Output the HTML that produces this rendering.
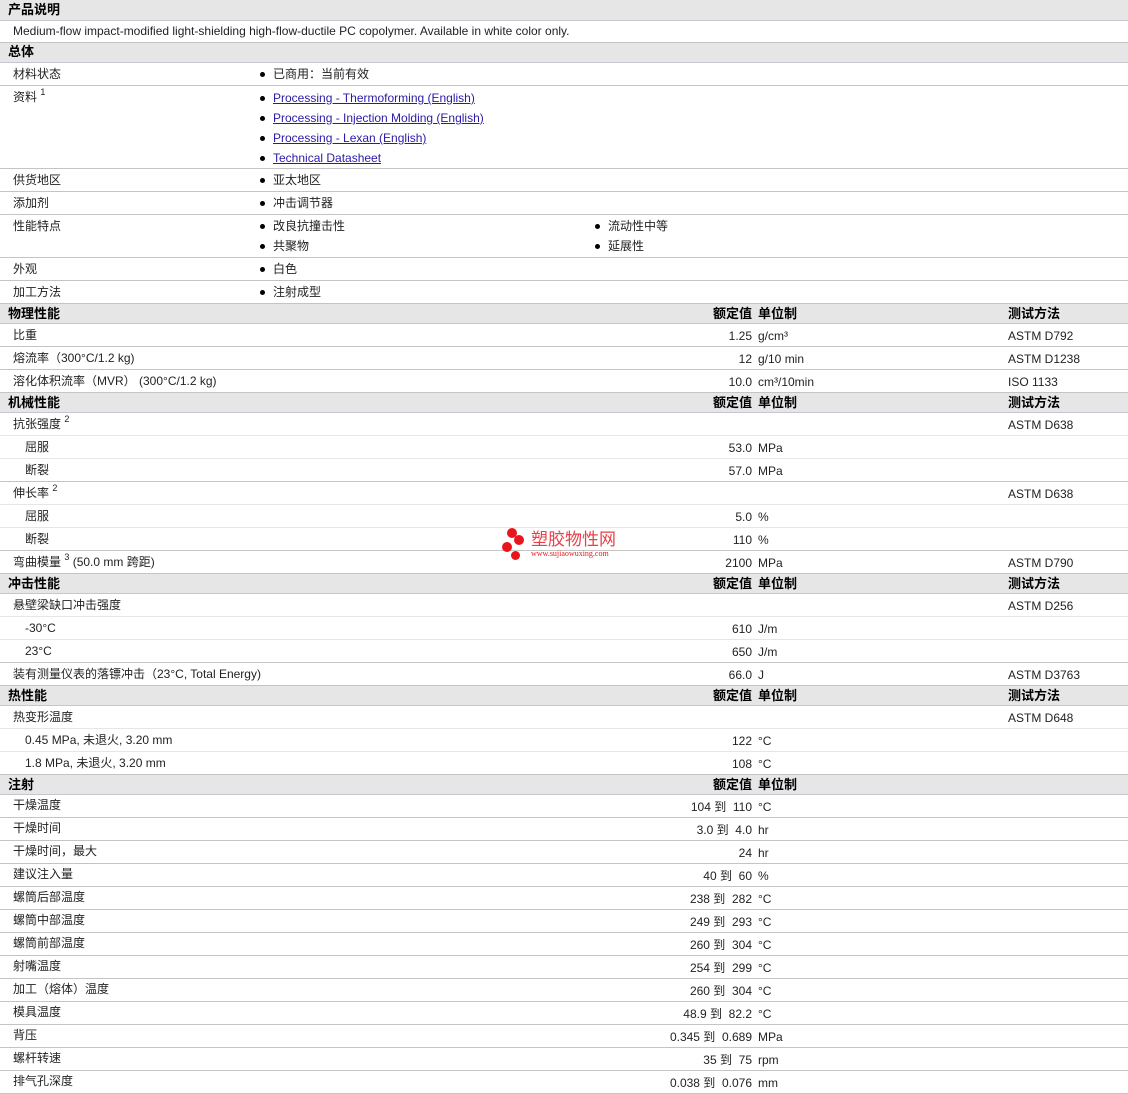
<!DOCTYPE html>
<html><head><meta charset="utf-8"><style>
body{margin:0;width:1128px;height:1089px;overflow:hidden;background:#fff;font-family:"Liberation Sans","Noto Sans CJK SC",sans-serif;font-size:12px;color:#222;position:relative}
.r{position:absolute;left:0;width:1128px;border-bottom:1px solid #c4c4c4;box-sizing:border-box}
.l{border-bottom-color:#e6e6e6}
.h{background:#e6e6e6;border-bottom:1px solid #c8c4d0;font-weight:bold;font-size:13px;color:#000}
.r span{position:absolute;white-space:nowrap;line-height:14px}
.a{left:13px;top:4px}.s{left:25px;top:4px}
.v{right:376px;top:5px;text-align:right}
.u{left:758px;top:5px}
.m{left:1008px;top:5px}
.h .a{left:8px;top:3px}
.h .hv{right:376px;top:3px}.h .hu{left:758px;top:3px}.h .hm{left:1008px;top:3px}
.b{left:273px}.b2{left:608px}
.b::before,.b2::before{content:"";position:absolute;left:-13px;top:5px;width:5px;height:5px;border-radius:50%;background:#000}
a{color:#2a1aa8;text-decoration:underline}
sup{font-size:9px;vertical-align:6px;line-height:0}
</style></head><body>
<div class="r h" style="top:0;height:21px"><span class="a">产品说明</span></div>
<div class="r" style="top:21px;height:22px"><span class="a" style="top:3px">Medium-flow impact-modified light-shielding high-flow-ductile PC copolymer. Available in white color only.</span></div>
<div class="r h" style="top:43px;height:20px"><span class="a" style="top:2px">总体</span></div>
<div class="r" style="top:63px;height:23px"><span class="a">材料状态</span><span class="b" style="top:4px">已商用：当前有效</span></div>
<div class="r" style="top:86px;height:83px"><span class="a">资料 <sup>1</sup></span>
<span class="b" style="top:5px"><a>Processing - Thermoforming (English)</a></span>
<span class="b" style="top:25px"><a>Processing - Injection Molding (English)</a></span>
<span class="b" style="top:45px"><a>Processing - Lexan (English)</a></span>
<span class="b" style="top:65px"><a>Technical Datasheet</a></span></div>
<div class="r" style="top:169px;height:23px"><span class="a">供货地区</span><span class="b" style="top:4px">亚太地区</span></div>
<div class="r" style="top:192px;height:23px"><span class="a">添加剂</span><span class="b" style="top:4px">冲击调节器</span></div>
<div class="r" style="top:215px;height:43px"><span class="a">性能特点</span><span class="b" style="top:4px">改良抗撞击性</span><span class="b2" style="top:4px">流动性中等</span><span class="b" style="top:24px">共聚物</span><span class="b2" style="top:24px">延展性</span></div>
<div class="r" style="top:258px;height:23px"><span class="a">外观</span><span class="b" style="top:4px">白色</span></div>
<div class="r" style="top:281px;height:23px"><span class="a">加工方法</span><span class="b" style="top:4px">注射成型</span></div>

<div class="r h" style="top:304px;height:20px"><span class="a">物理性能</span><span class="hv">额定值</span><span class="hu">单位制</span><span class="hm">测试方法</span></div>
<div class="r" style="top:324px;height:23px"><span class="a">比重</span><span class="v">1.25</span><span class="u">g/cm³</span><span class="m">ASTM D792</span></div>
<div class="r" style="top:347px;height:23px"><span class="a">熔流率（300°C/1.2 kg)</span><span class="v">12</span><span class="u">g/10 min</span><span class="m">ASTM D1238</span></div>
<div class="r" style="top:370px;height:23px"><span class="a">溶化体积流率（MVR） (300°C/1.2 kg)</span><span class="v">10.0</span><span class="u">cm³/10min</span><span class="m">ISO 1133</span></div>

<div class="r h" style="top:393px;height:20px"><span class="a">机械性能</span><span class="hv">额定值</span><span class="hu">单位制</span><span class="hm">测试方法</span></div>
<div class="r l" style="top:413px;height:23px"><span class="a">抗张强度 <sup>2</sup></span><span class="m">ASTM D638</span></div>
<div class="r l" style="top:436px;height:23px"><span class="s">屈服</span><span class="v">53.0</span><span class="u">MPa</span></div>
<div class="r" style="top:459px;height:23px"><span class="s">断裂</span><span class="v">57.0</span><span class="u">MPa</span></div>
<div class="r l" style="top:482px;height:23px"><span class="a">伸长率 <sup>2</sup></span><span class="m">ASTM D638</span></div>
<div class="r l" style="top:505px;height:23px"><span class="s">屈服</span><span class="v">5.0</span><span class="u">%</span></div>
<div class="r" style="top:528px;height:23px"><span class="s">断裂</span><span class="v">110</span><span class="u">%</span></div>
<div class="r" style="top:551px;height:23px"><span class="a">弯曲模量 <sup>3</sup> (50.0 mm 跨距)</span><span class="v">2100</span><span class="u">MPa</span><span class="m">ASTM D790</span></div>

<div class="r h" style="top:574px;height:20px"><span class="a">冲击性能</span><span class="hv">额定值</span><span class="hu">单位制</span><span class="hm">测试方法</span></div>
<div class="r l" style="top:594px;height:23px"><span class="a">悬壁梁缺口冲击强度</span><span class="m">ASTM D256</span></div>
<div class="r l" style="top:617px;height:23px"><span class="s">-30°C</span><span class="v">610</span><span class="u">J/m</span></div>
<div class="r" style="top:640px;height:23px"><span class="s">23°C</span><span class="v">650</span><span class="u">J/m</span></div>
<div class="r" style="top:663px;height:23px"><span class="a">装有测量仪表的落镖冲击（23°C, Total Energy)</span><span class="v">66.0</span><span class="u">J</span><span class="m">ASTM D3763</span></div>

<div class="r h" style="top:686px;height:20px"><span class="a">热性能</span><span class="hv">额定值</span><span class="hu">单位制</span><span class="hm">测试方法</span></div>
<div class="r l" style="top:706px;height:23px"><span class="a">热变形温度</span><span class="m">ASTM D648</span></div>
<div class="r l" style="top:729px;height:23px"><span class="s">0.45 MPa, 未退火, 3.20 mm</span><span class="v">122</span><span class="u">°C</span></div>
<div class="r" style="top:752px;height:23px"><span class="s">1.8 MPa, 未退火, 3.20 mm</span><span class="v">108</span><span class="u">°C</span></div>

<div class="r h" style="top:775px;height:20px"><span class="a">注射</span><span class="hv">额定值</span><span class="hu">单位制</span></div>
<div class="r" style="top:795px;height:23px"><span class="a" style="top:3px">干燥温度</span><span class="v">104 到&nbsp; 110</span><span class="u">°C</span></div>
<div class="r" style="top:818px;height:23px"><span class="a" style="top:3px">干燥时间</span><span class="v">3.0 到&nbsp; 4.0</span><span class="u">hr</span></div>
<div class="r" style="top:841px;height:23px"><span class="a" style="top:3px">干燥时间，最大</span><span class="v">24</span><span class="u">hr</span></div>
<div class="r" style="top:864px;height:23px"><span class="a" style="top:3px">建议注入量</span><span class="v">40 到&nbsp; 60</span><span class="u">%</span></div>
<div class="r" style="top:887px;height:23px"><span class="a" style="top:3px">螺筒后部温度</span><span class="v">238 到&nbsp; 282</span><span class="u">°C</span></div>
<div class="r" style="top:910px;height:23px"><span class="a" style="top:3px">螺筒中部温度</span><span class="v">249 到&nbsp; 293</span><span class="u">°C</span></div>
<div class="r" style="top:933px;height:23px"><span class="a" style="top:3px">螺筒前部温度</span><span class="v">260 到&nbsp; 304</span><span class="u">°C</span></div>
<div class="r" style="top:956px;height:23px"><span class="a" style="top:3px">射嘴温度</span><span class="v">254 到&nbsp; 299</span><span class="u">°C</span></div>
<div class="r" style="top:979px;height:23px"><span class="a" style="top:3px">加工（熔体）温度</span><span class="v">260 到&nbsp; 304</span><span class="u">°C</span></div>
<div class="r" style="top:1002px;height:23px"><span class="a" style="top:3px">模具温度</span><span class="v">48.9 到&nbsp; 82.2</span><span class="u">°C</span></div>
<div class="r" style="top:1025px;height:23px"><span class="a" style="top:3px">背压</span><span class="v">0.345 到&nbsp; 0.689</span><span class="u">MPa</span></div>
<div class="r" style="top:1048px;height:23px"><span class="a" style="top:3px">螺杆转速</span><span class="v">35 到&nbsp; 75</span><span class="u">rpm</span></div>
<div class="r" style="top:1071px;height:23px"><span class="a" style="top:3px">排气孔深度</span><span class="v">0.038 到&nbsp; 0.076</span><span class="u">mm</span></div>

<div style="position:absolute;left:501px;top:527px;width:130px;height:36px">
<div style="position:absolute;left:6px;top:1px;width:10px;height:10px;border-radius:50%;background:#e8161c"></div>
<div style="position:absolute;left:13px;top:8px;width:10px;height:10px;border-radius:50%;background:#e8161c"></div>
<div style="position:absolute;left:1px;top:15px;width:10px;height:10px;border-radius:50%;background:#e8161c"></div>
<div style="position:absolute;left:10px;top:24px;width:9px;height:9px;border-radius:50%;background:#e8161c"></div>
<div style="position:absolute;left:30px;top:3px;font-size:17px;line-height:20px;color:#e8404a">塑胶物性网</div>
<div style="position:absolute;left:30px;top:22px;font-size:8px;line-height:10px;color:#e8161c;font-family:'Liberation Serif',serif">www.sujiaowuxing.com</div>
</div>
</body></html>
